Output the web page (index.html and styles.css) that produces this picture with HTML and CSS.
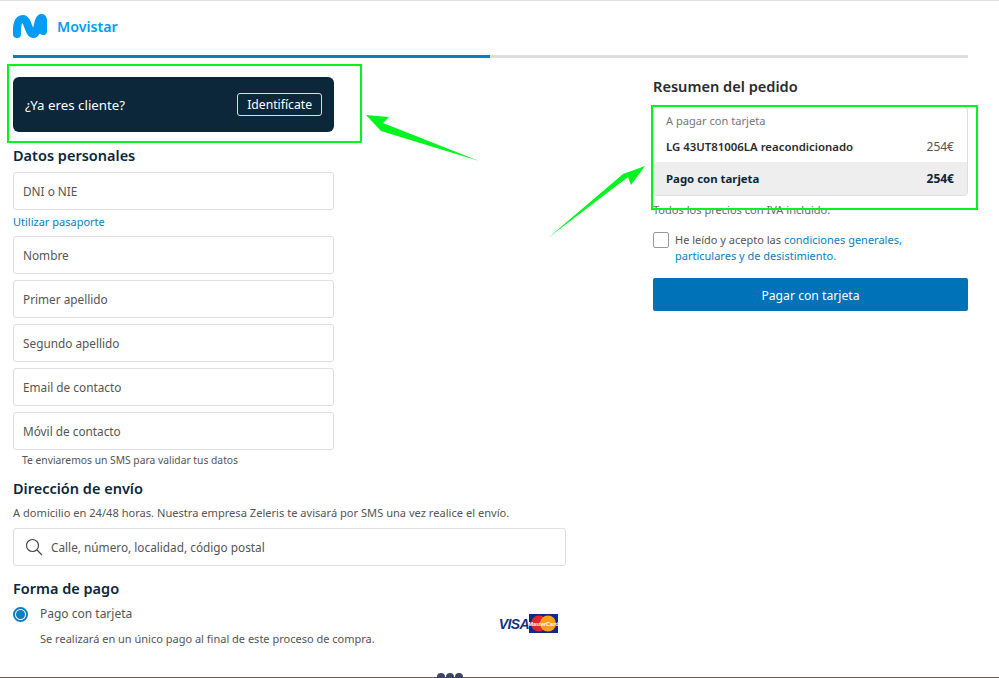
FILE: index.html
```html
<!DOCTYPE html>
<html lang="es">

<head>
    <meta charset="UTF-8">
    <meta name="viewport" content="width=device-width, initial-scale=1.0">
    <title>Movistar</title>
    <link rel="stylesheet" href="styles.css">
</head>

<body>
    <div class="page">
        <header class="top">
            <svg class="logo" width="34" height="25" viewBox="0 0 34 25">
                <path d="M4 20 C3.5 11 5 5 10 5 C15 5 15.5 20 20.5 20 C25 20 24.5 4 28.5 4 C31 4 30.5 12 30 17" fill="none" stroke="#019df4" stroke-width="8" stroke-linecap="round" />
            </svg>
            <span class="brand">Movistar</span>
        </header>

        <div class="progress">
            <div class="progress-done"></div>
        </div>

        <main class="columns">
            <section class="left">
                <div class="client-banner">
                    <span class="client-text">¿Ya eres cliente?</span>
                    <span class="client-btn">Identifícate</span>
                </div>

                <h2 class="title title-personal">Datos personales</h2>
                <div class="field">DNI o NIE</div>
                <a class="passport">Utilizar pasaporte</a>
                <div class="fields">
                    <div class="field">Nombre</div>
                    <div class="field">Primer apellido</div>
                    <div class="field">Segundo apellido</div>
                    <div class="field">Email de contacto</div>
                    <div class="field">Móvil de contacto</div>
                </div>
                <p class="hint">Te enviaremos un SMS para validar tus datos</p>

                <h2 class="title title-address">Dirección de envío</h2>
                <p class="note">A domicilio en 24/48 horas. Nuestra empresa Zeleris te avisará por SMS una vez realice el envío.</p>
                <div class="field field-wide">
                    <svg class="search-icon" width="18" height="18" viewBox="0 0 18 18">
                        <circle cx="7.5" cy="7.5" r="6" fill="none" stroke="#4a4a4a" stroke-width="1.2" />
                        <path d="M12 12 L17 17" stroke="#4a4a4a" stroke-width="1.2" />
                    </svg>
                    <span>Calle, número, localidad, código postal</span>
                </div>

                <h2 class="title title-payment">Forma de pago</h2>
                <div class="pay-row">
                    <div class="pay-info">
                        <div class="pay-option">
                            <span class="radio"><span class="radio-dot"></span></span>
                            <span>Pago con tarjeta</span>
                        </div>
                        <p class="pay-note">Se realizará en un único pago al final de este proceso de compra.</p>
                    </div>
                    <div class="cards">
                        <span class="visa">VISA</span>
                        <svg width="29" height="19" viewBox="0 0 29 19">
                            <rect width="29" height="19" fill="#0a2a8c" />
                            <circle cx="10" cy="9.5" r="8" fill="#e8222c" />
                            <circle cx="19" cy="9.5" r="8" fill="#f9a01b" />
                            <text x="14.5" y="11.5" font-family="Liberation Sans" font-size="5.5" font-weight="700" text-anchor="middle" fill="#fff">MasterCard</text>
                        </svg>
                    </div>
                </div>
            </section>

            <aside class="right">
                <h2 class="summary-title">Resumen del pedido</h2>
                <div class="summary-card">
                    <p class="summary-label">A pagar con tarjeta</p>
                    <div class="summary-row">
                        <span class="summary-name">LG 43UT81006LA reacondicionado</span>
                        <span class="summary-price">254€</span>
                    </div>
                    <div class="summary-total">
                        <span>Pago con tarjeta</span>
                        <span class="summary-price">254€</span>
                    </div>
                </div>
                <p class="vat">Todos los precios con IVA incluido.</p>
                <div class="terms">
                    <span class="checkbox"></span>
                    <p class="terms-text">He leído y acepto las <a>condiciones generales,</a><br><a>particulares y de desistimiento.</a></p>
                </div>
                <div class="pay-btn">Pagar con tarjeta</div>
            </aside>
        </main>

        <div class="bottom-line">
            <div class="dots"><span></span><span></span><span></span></div>
        </div>

        <!-- annotations drawn over the screenshot -->
        <div class="frame frame-client"></div>
        <div class="frame frame-summary"></div>
        <svg class="arrows" width="999" height="678" viewBox="0 0 999 678">
            <polygon points="366,115 389,117 383,123 479,161 381,131" fill="#00f520" />
            <polygon points="645,166 631,185 628,177 548,238 623,174" fill="#00f520" />
        </svg>
    </div>
</body>

</html>
```

FILE: styles.css
```css
* {
    box-sizing: border-box;
}

body {
    margin: 0;
    background-color: #fff;
    font-family: "Noto Sans", Arial, sans-serif;
    color: #555;
    overflow: hidden;
}

p,
h2 {
    margin: 0;
}

a {
    color: #0b7ebf;
}

.page {
    position: relative;
    display: flex;
    flex-direction: column;
    height: 678px;
    border-top: 1px solid #ddd;
    overflow: hidden;
}

.top {
    display: flex;
    align-items: center;
    gap: 10px;
    height: 54px;
    padding: 0 0 4px 13px;
}

.brand {
    color: #019df4;
    font-size: 14.2px;
    font-weight: 600;
}

.progress {
    height: 3px;
    margin: 0 31px 0 13px;
    background-color: #ddd;
}

.progress-done {
    width: 477px;
    height: 3px;
    background-color: #0b7ebf;
}

.columns {
    display: flex;
    flex: 1;
    gap: 87px;
    padding: 19px 31px 0 13px;
}

.left {
    width: 553px;
}

.right {
    width: 315px;
}

.client-banner {
    display: flex;
    align-items: center;
    justify-content: space-between;
    width: 321px;
    height: 55px;
    padding: 0 12px;
    background-color: #0b2739;
    border-radius: 6px;
    color: #fff;
}

.client-text {
    font-size: 13.3px;
}

.client-btn {
    padding: 2px 9px;
    border: 1px solid #ddd;
    border-radius: 3px;
    font-size: 12.2px;
    line-height: 17px;
}

.title {
    color: #0b2739;
    font-size: 14.5px;
    font-weight: 600;
    line-height: 20px;
}

.title-personal {
    margin: 13px 0 7px;
}

.title-address {
    margin-top: 11px;
}

.title-payment {
    margin: 12px 0 8px;
}

.field {
    display: flex;
    align-items: center;
    width: 321px;
    height: 38px;
    padding-left: 9px;
    border: 1px solid #ddd;
    border-radius: 3px;
    font-size: 11.8px;
}

.field-wide {
    gap: 8px;
    width: 553px;
    padding-left: 11px;
}

.passport {
    display: block;
    margin: 4px 0 6px;
    font-size: 11px;
    line-height: 16px;
}

.fields {
    display: flex;
    flex-direction: column;
    gap: 6px;
}

.hint {
    margin: 3px 0 0 9px;
    font-size: 10.3px;
    line-height: 14px;
}

.note {
    margin: 7px 0 7px;
    font-size: 11.1px;
    line-height: 16px;
}

.pay-row {
    display: flex;
    align-items: flex-start;
    justify-content: space-between;
    width: 545px;
}

.pay-option {
    display: flex;
    align-items: center;
    gap: 12px;
    font-size: 12px;
    line-height: 16px;
}

.radio {
    display: flex;
    align-items: center;
    justify-content: center;
    width: 15px;
    height: 15px;
    border: 2px solid #0b7ebf;
    border-radius: 50%;
}

.radio-dot {
    width: 9px;
    height: 9px;
    background-color: #0b7ebf;
    border-radius: 50%;
}

.pay-note {
    margin: 9px 0 0 27px;
    font-size: 11px;
    line-height: 16px;
}

.cards {
    display: flex;
    align-items: center;
    margin-top: 8px;
}

.visa {
    color: #14337f;
    font-family: "Liberation Sans", Arial, sans-serif;
    font-size: 14px;
    font-style: italic;
    font-weight: 700;
    letter-spacing: -0.6px;
}

.summary-title {
    margin-bottom: 10px;
    color: #2b2b2b;
    font-size: 14.6px;
    font-weight: 600;
    line-height: 19px;
}

.summary-card {
    height: 90px;
    border: 1px solid #ddd;
    border-radius: 4px;
    overflow: hidden;
}

.summary-label {
    padding: 6px 12px 0;
    color: #777;
    font-size: 11.1px;
    line-height: 16px;
}

.summary-row,
.summary-total {
    display: flex;
    align-items: center;
    justify-content: space-between;
    padding: 0 13px 0 12px;
    font-size: 11.4px;
}

.summary-row {
    height: 32px;
    margin-top: 1px;
}

.summary-name {
    color: #2b2b2b;
    font-weight: 600;
}

.summary-price {
    font-size: 12px;
}

.summary-total {
    height: 33px;
    background-color: #eee;
    color: #0b2739;
    font-weight: 700;
}

.vat {
    margin-top: 6px;
    color: #666;
    font-size: 11.05px;
    line-height: 16px;
}

.terms {
    display: flex;
    gap: 6px;
    margin-top: 14px;
}

.checkbox {
    flex: none;
    width: 16px;
    height: 16px;
    border: 1px solid #999;
    border-radius: 2px;
}

.terms-text {
    font-size: 11px;
    line-height: 16px;
}

.pay-btn {
    display: flex;
    align-items: center;
    justify-content: center;
    height: 33px;
    margin-top: 14px;
    padding-top: 1px;
    background-color: #0072b8;
    border-radius: 2px;
    color: #fff;
    font-size: 12.2px;
}

.bottom-line {
    position: relative;
    flex: none;
    height: 1px;
    background-color: #6b5a4e;
}

.dots {
    position: absolute;
    left: 437px;
    bottom: 0;
    display: flex;
    gap: 1px;
}

.dots span {
    width: 8px;
    height: 5px;
    background-color: #3d4466;
    border-radius: 4px 4px 0 0;
}

.frame {
    position: absolute;
    border: 2px solid #00f520;
}

.frame-client {
    left: 7px;
    top: 63px;
    width: 355px;
    height: 79px;
}

.frame-summary {
    left: 651px;
    top: 104px;
    width: 327px;
    height: 105px;
}

.arrows {
    position: absolute;
    left: 0;
    top: -1px;
    pointer-events: none;
}
```
